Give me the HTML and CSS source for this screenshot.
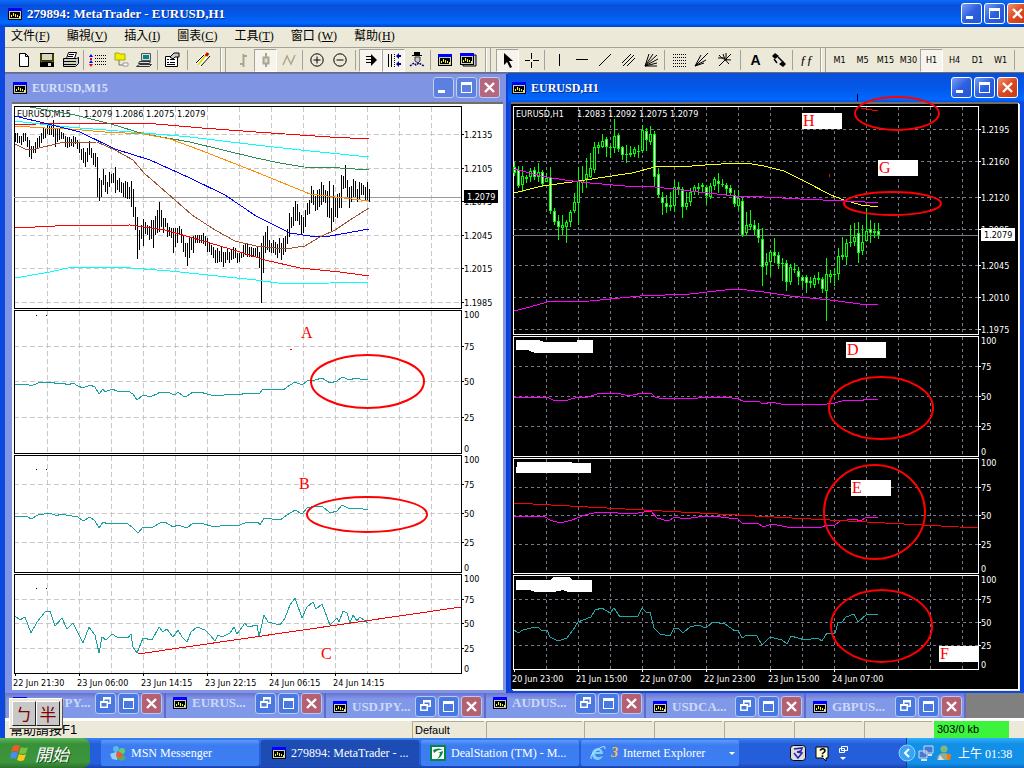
FILE: index.html
```
<!DOCTYPE html>
<html lang="zh-Hant">
<head>
  <meta charset="UTF-8">
  <meta name="viewport" content="width=device-width, initial-scale=1.0">
  <title>279894: MetaTrader - EURUSD,H1</title>
  <link rel="stylesheet" href="styles.css">
</head>
<body>

  <!-- shared icons -->
  <svg class="defs" aria-hidden="true">
    <symbol id="mt" viewBox="0 0 14 12">
      <rect width="14" height="12" fill="#000"/><rect width="14" height="3" fill="#0000ff"/>
      <rect x="1" y="3" width="12" height="8" fill="#ccc"/><rect x="2" y="4" width="10" height="6" fill="#000"/>
      <path d="M3.5 9V7M5.500 8V5M7.500 9V6M9.500 9V7M11.500 10V8" stroke="#ff0"/>
    </symbol>
    <symbol id="min" viewBox="0 0 21 21"><rect x="5" y="13" width="7" height="3" fill="#fff"/></symbol>
    <symbol id="max" viewBox="0 0 21 21"><path d="M5 5h11v11H5zM6 8v7h9V8z" fill="#fff" fill-rule="evenodd"/></symbol>
    <symbol id="restore" viewBox="0 0 21 21"><path d="M8 4h8v7h-3v4H5V8h3zM9.500 6.500V8H13v1.500h1.500v-3zM6.500 10v3.500h5V10z" fill="#fff" fill-rule="evenodd"/></symbol>
    <symbol id="close" viewBox="0 0 21 21"><path d="M6 6l9 9M15 6l-9 9" stroke="#fff" stroke-width="2.400"/></symbol>
  </svg>

  <div class="app">
    <header class="titlebar">
      <svg class="mt-icon"><use href="#mt"/></svg>
      <h1>279894: MetaTrader - EURUSD,H1</h1>
      <div class="win-btns">
        <button aria-label="Minimize"><svg><use href="#min"/></svg></button>
        <button aria-label="Maximize"><svg><use href="#max"/></svg></button>
        <button class="close" aria-label="Close"><svg><use href="#close"/></svg></button>
      </div>
    </header>

    <nav class="menubar">
      <a href="#">文件(<u>F</u>)</a>
      <a href="#">顯視(<u>V</u>)</a>
      <a href="#">插入(<u>I</u>)</a>
      <a href="#">圖表(<u>C</u>)</a>
      <a href="#">工具(<u>T</u>)</a>
      <a href="#">窗口 (<u>W</u>)</a>
      <a href="#">幫助(<u>H</u>)</a>
    </nav>

    <div class="toolbar">
      <button aria-label="New"><svg viewBox="0 0 20 20"><path d="M5.500 3.500h6l3 3v10h-9zM11.500 3.500v3h3" fill="#fff" stroke="#000"/></svg></button>
      <button aria-label="Save"><svg viewBox="0 0 20 20"><path d="M3 3h14v14H3z" fill="#000"/><path d="M5 4h10v6H5z" fill="#d8d4c4"/><path d="M4 4v8l2-1h8l2 1V4" stroke="#808000" fill="none"/><path d="M11 13h3v3h-3z" fill="#ddd"/></svg></button>
      <button aria-label="Print"><svg viewBox="0 0 20 20"><path d="M6.500 8.500l2-6h8l-2 6z" fill="#fff" stroke="#000"/><path d="M3.500 8.500h13l2-1v6l-3 3h-12z" fill="#ccc" stroke="#000"/><path d="M4 11.500h12M4 14.500h12M9 4.500h5M8 6.500h5" stroke="#000"/><path d="M10 13h3" stroke="#ee0"/></svg></button>
      <span class="sep"></span>
      <button aria-label="Market watch"><svg viewBox="0 0 20 20"><path d="M7 5.500h12M7 8.500h12M7 11.500h12M7 14.500h12" stroke="#000" stroke-dasharray="1 1"/><path d="M3 4l2 3H1zM3 10l2 3H1z" fill="#00f"/><path d="M3 17l2-3H1zM2 8h2v2H2z" fill="#e00"/></svg></button>
      <button aria-label="Navigator"><svg viewBox="0 0 20 20"><path d="M4 3h4l1 1h5v6H4z" fill="#ee0" stroke="#aa0"/><path d="M8 10v5h4" stroke="#777" fill="none"/><path d="M12 13h5v3h-5z" fill="#fff" stroke="#999"/></svg></button>
      <button aria-label="Terminal"><svg viewBox="0 0 20 20"><path d="M7.500 3.500h9v7h-9z" fill="#ddd" stroke="#555"/><path d="M9 5h6v4H9z" fill="#088"/><path d="M5.500 11.500h11l-1 2h-11zM2.500 16.500l3-2h12l-2 2z" fill="#ddd" stroke="#333"/></svg></button>
      <span class="sep"></span>
      <button aria-label="Properties"><svg viewBox="0 0 20 20"><path d="M3.500 6.500h12v10h-12z" fill="#fff" stroke="#000"/><path d="M5 9.500h2M8 9.500h5M5 12.500h2M8 12.500h5M5 14.500h8" stroke="#000"/><path d="M8 7l4-4h5v4h-4l-2 2z" fill="#ccc" stroke="#000"/></svg></button>
      <span class="sep wide"></span>
      <button aria-label="Edit"><svg viewBox="0 0 20 20"><path d="M2 13l8-9 7 3-9 10z" fill="#fff"/><path d="M3 13l8-8M8 16l9-10" stroke="#000"/><path d="M5 15l8-10" stroke="#dd0" stroke-width="2"/><path d="M13 6l2-3" stroke="#c00" stroke-width="3"/></svg></button>
      <span class="grip"></span>
      <button aria-label="Bar chart"><svg viewBox="0 0 20 20"><path d="M10.500 4v13M7 14h3M11 6h3" stroke="#aaa690" stroke-width="2"/></svg></button>
      <button class="pressed" aria-label="Candles"><svg viewBox="0 0 20 20"><path d="M10 3v14" stroke="#aaa690" stroke-width="2"/><path d="M7.500 7.500h5v6h-5z" fill="#ddd" stroke="#aaa690" stroke-width="2"/></svg></button>
      <button aria-label="Line chart"><svg viewBox="0 0 20 20"><path d="M4 15l4-9 4 8 4-9" stroke="#aaa690" stroke-width="1.500" fill="none"/></svg></button>
      <span class="sep"></span>
      <button aria-label="Zoom in"><svg viewBox="0 0 20 20"><circle cx="10" cy="10" r="6.200" fill="none" stroke="#000"/><path d="M6.500 10h7M10 6.500v7" stroke="#000"/></svg></button>
      <button aria-label="Zoom out"><svg viewBox="0 0 20 20"><circle cx="10" cy="10" r="6.200" fill="none" stroke="#000"/><path d="M6.500 10h7" stroke="#000"/></svg></button>
      <span class="sep wide"></span>
      <button class="pressed" aria-label="Auto scroll"><svg viewBox="0 0 20 20"><path d="M10 4l6 6-6 6z"/><path d="M5 6.500h5M5 9.500h5M5 12.500h5" stroke="#000"/></svg></button>
      <button class="pressed" aria-label="Chart shift"><svg viewBox="0 0 20 20"><path d="M4.500 4v13M7.500 4v13" stroke="#000"/><path d="M10.500 4v13" stroke="#000" stroke-dasharray="1 1"/><path d="M12 6l3-3v2h2v2h-2v2zM12 14l3-3v2h2v2h-2v2z" fill="#008"/></svg></button>
      <button aria-label="Advisors"><svg viewBox="0 0 20 20"><path d="M7 2h6v3h2v1H5V5h2z"/><path d="M8 7h5v4l-2 2-3-2z" fill="#ccc" stroke="#333"/><path d="M3 16l4-3 2 2 3-2 5 3" stroke="#008" stroke-width="1.500" stroke-dasharray="2 1" fill="none"/></svg></button>
      <span class="sep"></span>
      <button aria-label="New chart"><svg class="mt-icon"><use href="#mt"/></svg></button>
      <button aria-label="Profiles"><svg viewBox="0 0 20 20"><path d="M5 5h13v11H5z" fill="#ccc" stroke="#000"/><use href="#mt" x="2" y="3" width="14" height="12"/></svg></button>
      <span class="grip"></span>
      <button class="pressed" aria-label="Cursor"><svg viewBox="0 0 20 20"><path d="M6 3v12l3-3 3 6 2-1-3-6h4z"/></svg></button>
      <button aria-label="Crosshair"><svg viewBox="0 0 20 20"><path d="M10.500 3v6M10.500 12v6M4 10.500h5M12 10.500h6" stroke="#000"/></svg></button>
      <span class="sep"></span>
      <button aria-label="Vertical line"><svg viewBox="0 0 20 20"><path d="M10.500 4v12" stroke="#000"/></svg></button>
      <button aria-label="Horizontal line"><svg viewBox="0 0 20 20"><path d="M4 9.500h12" stroke="#000"/></svg></button>
      <button aria-label="Trendline"><svg viewBox="0 0 20 20"><path d="M4 16L16 4" stroke="#000"/></svg></button>
      <button aria-label="Channel"><svg viewBox="0 0 20 20"><path d="M4 13l9-9M5 16L16 5M9 16l8-8" stroke="#000"/></svg></button>
      <button aria-label="Gann fan"><svg viewBox="0 0 20 20"><path d="M4 16L8 4M4 16l8-12M4 16L16 5M4 16l13-7M4 16l12-3M4 16h12" stroke="#000"/></svg></button>
      <span class="sep"></span>
      <button aria-label="Fibonacci"><svg viewBox="0 0 20 20"><path d="M4 4.500h13M4 7.500h13M4 10.500h13M4 13.500h13M4 16.500h13" stroke="#000" stroke-dasharray="1 1"/></svg></button>
      <button aria-label="Fibonacci fan"><svg viewBox="0 0 20 20"><path d="M3 16L9 5M3 16L16 3M3 16l11-6M3 16l9-3" stroke="#000"/></svg></button>
      <button aria-label="Fibonacci arcs"><svg viewBox="0 0 20 20"><path d="M4 16L16 4M4 5q3 5 12 5M8 4q1 6 6 10M3 8h6M11 3v8" stroke="#000" fill="none"/></svg></button>
      <span class="sep wide"></span>
      <button aria-label="Text"><b>A</b></button>
      <button aria-label="Arrows"><svg viewBox="0 0 20 20"><path d="M6 3l4 3-4 3-3-3zM14 11l3 3-3 3-4-3z"/><path d="M5 9l3 4M9 7l5 5" stroke="#000" stroke-width="1.500"/></svg></button>
      <span class="sep"></span>
      <button aria-label="Indicators"><i>ƒƒ</i></button>
      <span class="grip narrow"></span>
      <button>M1</button>
      <button>M5</button>
      <button>M15</button>
      <button>M30</button>
      <button class="pressed">H1</button>
      <button>H4</button>
      <button>D1</button>
      <button>W1</button>
      <span class="sep"></span>
    </div>

    <main class="workspace">
      <section class="chart-window inactive">
        <div class="mdi-title">
          <svg class="mt-icon"><use href="#mt"/></svg>
          <h2>EURUSD,M15</h2>
          <div class="win-btns">
            <button aria-label="Minimize"><svg><use href="#min"/></svg></button>
            <button aria-label="Maximize"><svg><use href="#max"/></svg></button>
            <button class="close" aria-label="Close"><svg><use href="#close"/></svg></button>
          </div>
        </div>
        <div class="client"><svg id="m15" viewBox="12 104 491 586" preserveAspectRatio="xMinYMin meet"></svg></div>
      </section>

      <section class="chart-window active">
        <div class="mdi-title">
          <svg class="mt-icon"><use href="#mt"/></svg>
          <h2>EURUSD,H1</h2>
          <div class="win-btns">
            <button aria-label="Minimize"><svg><use href="#min"/></svg></button>
            <button aria-label="Maximize"><svg><use href="#max"/></svg></button>
            <button class="close" aria-label="Close"><svg><use href="#close"/></svg></button>
          </div>
        </div>
        <div class="client"><svg id="h1" viewBox="511 104 507 585" preserveAspectRatio="xMinYMin meet"></svg></div>
      </section>
    </main>

    <div class="minimized" id="minimized"></div>

    <footer class="statusbar">
      <span class="help">幫助請按F1</span>
      <span class="cell profile">Default</span>
      <span class="cell first"></span>
      <span class="cell"></span>
      <span class="cell"></span>
      <span class="cell"></span>
      <span class="cell"></span>
      <span class="cell"></span>
      <span class="traffic">303/0 kb</span>
      <div class="ime"><button>ㄅ</button><button>半</button></div>
    </footer>
  </div>

  <div class="taskbar">
    <button class="start">
      <svg viewBox="0 0 20 18"><path d="M3 2q4-2 7 0L8 8q-3-2-7 0z" fill="#f05a28"/><path d="M11 3q4 2 7 0l-2 6q-4 2-7 0z" fill="#7cc242"/><path d="M1 9q3-2 7 0l-2 6q-3-2-6 0z" fill="#4a8cf0"/><path d="M9 10q4 2 7 0l-2 6q-3 2-7 0z" fill="#fbc916"/></svg>
      開始
    </button>
    <button class="task">
      <svg viewBox="0 0 16 16"><circle cx="6" cy="4" r="3" fill="#5db5e8"/><circle cx="12" cy="6" r="3" fill="#6c6"/><path d="M0 9l6-2 3 3-2 5-5-1z" fill="#9cd0f5"/><path d="M8 9l6 1 2 4-5 2-4-2z" fill="#58a868"/><circle cx="9" cy="10" r="3" fill="#e86030"/></svg>
      MSN Messenger
    </button>
    <button class="task current">
      <svg class="mt-icon"><use href="#mt"/></svg>
      279894: MetaTrader - ...
    </button>
    <button class="task">
      <svg viewBox="0 0 16 16"><rect x="1" y="1" width="14" height="14" fill="#fff" stroke="#084" stroke-width="2"/><path d="M3 5q6-3 10 0-5-1-9 3zM8 8q4-2 5-2 0 5-6 8 3-3 3-6z" fill="#084"/></svg>
      DealStation (TM) - M...
    </button>
    <button class="task">
      <svg viewBox="0 0 16 16"><path d="M13 9H5q1 4 5 3l3-1q-2 4-6 4-5-1-5-6t6-6q5 1 5 6zM5 7h5q-1-3-5 0z" fill="#7fd0ff" fill-rule="evenodd"/><path d="M1 14Q0 9 8 4t7 0" stroke="#bfe8ff" fill="none"/></svg>
      <em>3</em> Internet Explorer
      <span class="drop"></span>
    </button>
    <div class="lang">
      <svg viewBox="0 0 16 16"><rect x=".5" y=".5" width="15" height="15" rx="3" fill="#ddd" stroke="#000"/><path d="M4 4l8-1-1 3-4 1 5 1-4 5-4-5" stroke="#22a" fill="none" stroke-width="1.500"/></svg>
      <svg viewBox="0 0 16 16"><path d="M2 2h12v11h-2v3l-3-3H2z" fill="#ffd" stroke="#000"/><text x="5" y="12">?</text></svg>
      <svg viewBox="0 0 10 16"><path d="M3.500 1.500h6v4h-6zM1.500 3.500h5v4h-5z" fill="#245edb" stroke="#fff"/><path d="M2 12h6l-3 3z" fill="#fff"/></svg>
    </div>
    <div class="tray">
      <svg class="arrow" viewBox="0 0 18 18"><circle cx="9" cy="9" r="8" fill="#3aa4f4" stroke="#9cf"/><path d="M11 5L7 9l4 4" stroke="#fff" stroke-width="2" fill="none"/></svg>
      <svg viewBox="0 0 16 16"><path d="M6 1h9v7H6zM1 6h8v7H1z" fill="#4878d0" stroke="#cde"/><path d="M3 15h6M10 10h4" stroke="#ddd" stroke-width="2"/></svg>
      <svg viewBox="0 0 16 16"><circle cx="8" cy="4" r="3.500" fill="#7db87d"/><path d="M1 15q0-7 7-7t6 7z" fill="#8fae8f"/><path d="M11 9h4l-1 6h-3z" fill="#f70"/><path d="M4 10l4 5H2z" fill="#dde"/></svg>
      <time>上午 01:38</time>
    </div>
  </div>

  <script src="charts.js"></script>
</body>
</html>
```
FILE: styles.css
```
* {
  box-sizing: border-box;
}
body {
  margin: 0;
  height: 100vh;
  display: flex;
  flex-direction: column;
  overflow: hidden;
  background: #808080;
  color: #000;
  font-family: "Liberation Serif", "Noto Sans CJK TC", serif;
  font-size: 12px;
}
button {
  border: 0;
  padding: 0;
  font: inherit;
  color: inherit;
  background: none;
}
a {
  color: inherit;
  text-decoration: none;
}
h1,
h2 {
  margin: 0;
  font-size: 12px;
  line-height: 16px;
  flex: 1;
  white-space: nowrap;
}
.defs {
  position: absolute;
  width: 0;
  height: 0;
}
.mt-icon {
  width: 14px;
  height: 12px;
  flex: none;
}

/* main window */
.app {
  flex: 1;
  min-height: 0;
  display: flex;
  flex-direction: column;
  border-left: 5px solid #0a48e0;
}
.titlebar {
  height: 27px;
  flex: none;
  display: flex;
  align-items: center;
  gap: 5px;
  margin-left: -5px;
  padding-left: 8px;
  overflow: hidden;
  background: linear-gradient(#0c6cf8, #0850dc 20%, #0458e8 55%, #0068ff 85%, #0040c8);
  color: #fff;
  text-shadow: 1px 1px #0a2a88;
}
.titlebar h1 {
  font-size: 13px;
}
.titlebar .win-btns {
  margin-right: -4px;
}
.win-btns {
  display: flex;
  gap: 2px;
}
.win-btns button {
  width: 21px;
  height: 21px;
  border: 1px solid #fff;
  border-radius: 3px;
  background: linear-gradient(135deg, #7c9cf4, #2c60e0 50%, #2456d4);
}
.win-btns button.close {
  background: linear-gradient(135deg, #f09070, #dc4820 50%, #c83c14);
}
.win-btns svg {
  display: block;
  width: 21px;
  height: 21px;
  margin: -1px;
}

.menubar {
  height: 20px;
  flex: none;
  display: flex;
  gap: 17px;
  padding-left: 6px;
  line-height: 19px;
  background: #ece9d8;
}
.toolbar {
  height: 26px;
  flex: none;
  display: flex;
  align-items: center;
  padding-left: 7px;
  background: #ece9d8;
  border-top: 1px solid #a5a29a;
  border-bottom: 1px solid #716f64;
  font-family: "DejaVu Sans Condensed", "Liberation Sans", sans-serif;
  font-size: 9px;
}
.toolbar button {
  width: 23px;
  height: 23px;
  flex: none;
  display: flex;
  align-items: center;
  justify-content: center;
}
.toolbar button svg:not(.mt-icon) {
  width: 20px;
  height: 20px;
}
.toolbar .pressed {
  background: #f6f4ec;
  border: 1px solid;
  border-color: #a5a29a #fff #fff #a5a29a;
}
.toolbar b {
  font-family: "Liberation Sans", sans-serif;
  font-size: 14px;
}
.toolbar i {
  font-family: "Liberation Serif", serif;
  font-size: 13px;
}
.sep {
  width: 5px;
  height: 20px;
  flex: none;
  background: linear-gradient(#a5a29a, #a5a29a) center / 1px 100% no-repeat;
}
.sep.wide {
  width: 8px;
}
.grip {
  width: 17px;
  height: 24px;
  flex: none;
  background:
    linear-gradient(#a5a29a, #a5a29a) 6px 0 / 1px 100% no-repeat,
    linear-gradient(#fff, #fff) 7px 0 / 1px 100% no-repeat,
    linear-gradient(#a5a29a, #a5a29a) 11px 0 / 1px 100% no-repeat;
}
.grip.narrow {
  width: 10px;
  background-position: 2px 0, 3px 0, 7px 0;
}

/* chart windows */
.workspace {
  flex: 1;
  min-height: 0;
  display: grid;
  grid-template-columns: 503fr 516fr;
}
.chart-window {
  display: flex;
  flex-direction: column;
  min-width: 0;
  min-height: 0;
}
.mdi-title {
  height: 29px;
  flex: none;
  display: flex;
  align-items: center;
  gap: 5px;
}
.inactive {
  padding: 0 5px 3px 7px;
  background: #8094e4;
  border-right: 0;
  box-shadow: inset 0 1px #6070d0, inset -2px 0 #1040d8;
}
.inactive .mdi-title {
  padding: 0 3px 0 1px;
  color: #d8e0fc;
}
.inactive .win-btns button {
  border-color: #c4ccf0;
  background: #5c80e0;
}
.inactive .win-btns button.close {
  background: #b46880;
}
.active {
  padding: 0 6px 4px 3px;
  background: linear-gradient(#0850dc, #0458e8 15px, #0068ff 26px, #0a48e0 30px);
}
.active .mdi-title {
  padding-left: 1px;
  color: #fff;
  text-shadow: 1px 1px #0a2a88;
}
.client {
  flex: 1;
  min-height: 0;
  border-top: 2px solid #716f64;
}
.inactive .client {
  background: #fff;
}
.active .client {
  background: #000;
  box-shadow: 1px 1px #fff, 2px 2px #ece9d8;
}
.client svg {
  display: block;
  position: relative;
  width: 100%;
  height: 100%;
  overflow: visible;
  shape-rendering: crispEdges;
  font-family: "DejaVu Sans Condensed", "Liberation Sans", sans-serif;
  font-size: 9px;
}
.client path {
  fill: none;
}
.client .note {
  font-family: "Liberation Serif", serif;
  font-size: 16px;
  fill: #f00;
}
.client ellipse {
  fill: none;
  stroke: #f00;
  stroke-width: 2;
  shape-rendering: auto;
}

/* minimized charts */
.minimized {
  height: 28px;
  flex: none;
  display: flex;
  padding-left: 1px;
  border-bottom: 3px solid #fff;
}
.mini {
  width: 160px;
  flex: none;
  display: flex;
  align-items: center;
  gap: 5px;
  padding: 2px 2px 0 7px;
  overflow: hidden;
  background: linear-gradient(#6c70d0, #8098e8 6px);
  border-right: 2px solid #6468c8;
  color: #cdd8fa;
  font-size: 13px;
  font-weight: bold;
}
.mini.raised {
  padding: 0 2px 5px 7px;
}
.mini span {
  flex: 1;
  white-space: nowrap;
}
.mini .win-btns button {
  border-color: #b8c8f4;
  background: #4878e0;
}
.mini .win-btns button.close {
  background: #b46070;
}

.statusbar {
  position: relative;
  height: 17px;
  flex: none;
  display: flex;
  padding-right: 15px;
  background: #ece9d8;
  font-family: "Liberation Sans", "Noto Sans CJK TC", sans-serif;
  font-size: 11px;
  line-height: 17px;
}
.help {
  flex: 1;
  padding-left: 5px;
  font-size: 13px;
}
.cell {
  width: 68px;
  margin-right: 2px;
  border: solid #b0ac94;
  border-width: 1px 0 0 1px;
}
.cell.profile {
  width: 72px;
  padding-left: 2px;
}
.cell.first {
  width: 96px;
}
.traffic {
  width: 75px;
  padding-left: 3px;
  background: #3cf43c;
}
/* input method bar floats over the frame */
.ime {
  position: absolute;
  left: 4px;
  bottom: 9px;
  display: flex;
  padding: 2px;
  background: #ece9d8;
  border: 1px solid;
  border-color: #fff #555 #555 #fff;
}
.ime button {
  width: 24px;
  height: 25px;
  background: #c8c8c8;
  border: 1px solid;
  border-color: #fff #222 #222 #fff;
  color: #800000;
  font-family: "Noto Sans CJK TC", sans-serif;
  font-size: 17px;
  line-height: 22px;
}

/* taskbar */
.taskbar {
  height: 30px;
  flex: none;
  display: flex;
  align-items: stretch;
  gap: 2px;
  background: linear-gradient(#3c84f0, #245edb 20%, #245edb 85%, #1840a8);
  color: #fff;
}
.start {
  width: 90px;
  margin-right: 9px;
  display: flex;
  align-items: center;
  gap: 5px;
  padding-left: 10px;
  border-radius: 0 8px 8px 0;
  background: linear-gradient(#5cb85c, #389038 20%, #3c963c 80%, #2c702c);
  font-size: 17px;
  font-style: italic;
  text-shadow: 1px 1px #1c4c1c;
}
.start svg {
  width: 20px;
  height: 18px;
}
.task {
  width: 158px;
  flex: 0 1 auto;
  margin: 2px 0;
  display: flex;
  align-items: center;
  gap: 5px;
  padding-left: 9px;
  border-radius: 2px;
  background: linear-gradient(#5c9cfc, #3c7cf0 20%, #3c80f4);
  text-align: left;
  white-space: nowrap;
}
.task.current {
  background: #1c4cb4;
  padding-left: 11px;
}
.task > svg:not(.mt-icon) {
  width: 16px;
  height: 16px;
}
.task em {
  color: #ffc040;
  font-size: 14px;
  font-weight: bold;
}
.drop {
  margin-left: auto;
  margin-right: 4px;
  border: 3px solid transparent;
  border-top-color: #fff;
  border-bottom: 0;
}
.lang {
  flex: 1;
  display: flex;
  align-items: center;
  justify-content: flex-end;
  gap: 8px;
  padding-right: 56px;
}
.lang svg {
  height: 16px;
}
.lang text {
  font: bold 12px "Liberation Sans", sans-serif;
}
.tray {
  width: 118px;
  display: flex;
  align-items: center;
  gap: 2px;
  background: linear-gradient(#30b0f8, #1290e8 20%, #1290e8 85%, #0c68c0);
  border-left: 1px solid #0a3c90;
}
.tray svg {
  width: 16px;
  height: 16px;
}
.tray .arrow {
  width: 18px;
  height: 18px;
  margin-left: -9px;
}
.tray time {
  margin-left: 4px;
  white-space: nowrap;
}
```
FILE: charts.js
```
const NS = 'http://www.w3.org/2000/svg';

function add(svg, name, attrs, text) {
  const el = document.createElementNS(NS, name);
  for (const key in attrs) el.setAttribute(key, attrs[key]);
  if (text !== undefined) el.textContent = text;
  svg.appendChild(el);
}

// panes, grid, axis and scale labels
function drawFrame(svg, c) {
  c.panes.forEach(p => {
    p.grid.forEach(y => add(svg, 'path', { d: `M${c.left} ${y}.5H${c.right}`, stroke: c.grid, 'stroke-dasharray': c.dash }));
    for (let x = c.gridX; x < c.right; x += 32) {
      add(svg, 'path', { d: `M${x}.5 ${p.top + 1}V${p.bottom}`, stroke: c.grid, 'stroke-dasharray': c.dash });
    }
    add(svg, 'path', { d: `M${c.left}.5 ${p.top}.5H${c.right}.5V${p.bottom}.5H${c.left}.5Z`, stroke: c.ink });
    p.grid.forEach(y => add(svg, 'path', { d: `M${c.right} ${y}.5h3`, stroke: c.ink }));
    p.labels.forEach(([text, y]) => add(svg, 'text', { x: c.right + 3, y: y + 4, fill: c.ink }, text));
  });
  c.times.forEach((text, i) => {
    add(svg, 'path', { d: `M${c.left + 1 + i * 64}.5 ${c.bottom}v3`, stroke: c.ink });
    add(svg, 'text', { x: c.left - 1 + i * 64, y: c.bottom + 13, fill: c.ink }, text);
  });
  add(svg, 'text', { x: c.left + 3, y: 117, fill: c.ink }, c.symbol);
  c.prices.forEach((text, i) => add(svg, 'text', { x: c.priceX + i * 31, y: 117, fill: c.ink }, text));
}

function drawLines(svg, lines) {
  lines.forEach(([color, points]) => add(svg, 'polyline', { points, fill: 'none', stroke: color }));
}

function drawPrice(svg, c, y, back, ink) {
  add(svg, 'path', { d: `M${c.left} ${y}.5H${c.right}`, stroke: c.grid === '#c8c8c8' ? '#999' : c.grid });
  add(svg, 'rect', { x: c.right + 3, y: y - 7, width: 34, height: 13, fill: back });
  add(svg, 'text', { x: c.right + 6, y: y + 3, fill: ink }, '1.2079');
}

function note(svg, text, x, y, box) {
  if (box) add(svg, 'rect', { x: x - 1, y: y - 13, width: 40, height: 16, fill: '#fff' });
  add(svg, 'text', { x, y, class: 'note' }, text);
}

function ring(svg, x1, y1, x2, y2) {
  add(svg, 'ellipse', { cx: (x1 + x2) / 2, cy: (y1 + y2) / 2, rx: (x2 - x1) / 2, ry: (y2 - y1) / 2 });
}

// ---------- M15 ----------
const m15 = document.getElementById('m15');
const left = {
  left: 14, right: 461, bottom: 673, gridX: 47, grid: '#c8c8c8', ink: '#000', dash: '5 3',
  symbol: 'EURUSD,M15', prices: ['1.2079', '1.2086', '1.2075', '1.2079'], priceX: 84,
  times: ['22 Jun 21:30', '23 Jun 06:00', '23 Jun 14:15', '23 Jun 22:15', '24 Jun 06:15', '24 Jun 14:15'],
  panes: [
    { top: 106, bottom: 308, grid: [134, 168, 201, 235, 268, 302],
      labels: [['1.2135', 134], ['1.2105', 168], ['1.2075', 201], ['1.2045', 235], ['1.2015', 268], ['1.1985', 302]] },
    { top: 310, bottom: 453, grid: [346, 381, 417], labels: [['100', 314], ['75', 346], ['50', 381], ['25', 417], ['0', 448]] },
    { top: 455, bottom: 572, grid: [484, 513, 542], labels: [['100', 459], ['75', 484], ['50', 513], ['25', 542], ['0', 567]] },
    { top: 574, bottom: 673, grid: [599, 623, 648], labels: [['100', 578], ['75', 599], ['50', 623], ['25', 648], ['0', 668]] }
  ]
};
// high,low per bar
const bars = `133,142 133,143 136,143 136,145 133,142 133,141 137,147 140,157 146,159 146,153 142,153 138,148
136,147 133,143 128,139 128,138 125,134 126,135 126,135 120,137 128,147 129,142 129,140 132,139 133,139 136,147
137,148 137,147 139,146 136,147 137,144 140,149 142,153 149,160 148,163 152,167 148,162 141,155 148,158 153,165
153,167 157,197 178,201 180,197 169,185 175,192 182,194 172,187 174,183 173,183 167,193 180,190 178,192 182,193
183,197 181,198 182,199 187,199 181,207 189,217 207,230 217,259 230,250 225,239 219,246 222,234 225,235 226,240
220,239 220,248 216,235 210,233 202,232 210,227 218,233 218,227 223,237 227,236 228,238 228,253 228,247 228,243
226,235 229,243 236,252 243,257 243,266 238,258 238,250 236,253 235,243 235,243 235,243 235,243 233,244 236,246
238,252 243,252 245,255 247,258 250,263 248,263 251,262 246,262 252,267 252,263 249,260 252,263 250,260 247,259
248,258 253,263 253,262 252,258 245,257 243,255 244,257 247,257 247,257 248,256 248,256 247,257 252,268 243,303
236,273 232,253 226,250 240,252 243,253 240,253 242,255 244,258 238,253 243,260 238,255 236,252 229,244 213,237
217,228 207,226 201,221 204,221 212,225 215,235 217,233 210,227 203,215 200,214 186,203 190,205 196,211 190,210
189,207 182,205 185,202 190,203 191,217 181,218 208,232 185,222 197,217 194,218 193,208 175,208 176,189 165,188
180,197 187,208 186,202 179,197 181,197 189,202 182,199 183,195 185,195 187,200 182,201 189,202`.split(/\s+/);

drawFrame(m15, left);
drawPrice(m15, left, 197, '#000', '#fff');
add(m15, 'path', { d: bars.map((b, i) => `M${15 + i * 2}.5 ${b.replace(',', 'V')}`).join(''), stroke: '#000' });
drawLines(m15, [
  ['#f00', '15,125 57,123 144,123 168,125 202,128 256,132 300,135 330,137 369,139'],
  ['#0ff', '15,121 48,125 80,128 144,133 190,137 256,145 310,151 369,157'],
  ['#2e8b57', '30,107 75,115 111,124 144,134 190,142 256,158 280,163 304,167 340,168 369,170'],
  ['#ff8c00', '15,126 45,128 70,129 105,132 144,134 170,139 200,150 256,172 310,194 335,197 369,201'],
  ['#00f', '15,116 48,124 80,132 115,149 150,160 190,178 225,195 256,216 290,233 310,236 330,236 369,229'],
  ['#a0522d', '15,144 25,149 35,149 60,143 97,142 115,150 133,160 144,173 175,200 192,215 215,230 235,241 256,246 285,249 305,246 320,237 335,230 350,220 369,208'],
  ['#f00', '15,228 55,226 130,225 165,230 200,240 240,252 265,260 300,268 340,272 369,276'],
  ['#0ff', '15,278 50,272 72,267 118,267 170,271 256,280 285,284 330,283 369,282'],
  ['#18a0a0', '15,384 27,384 31,386 38,383 45,382 52,382 57,384 63,383 68,385 73,383 78,386 83,388 90,385 95,387 99,394 103,389 105,392 112,389 117,391 128,391 133,394 137,400 143,395 147,396 152,396 157,394 160,392 163,393 167,392 175,395 178,392 183,396 187,396 193,392 200,392 207,394 215,396 233,394 240,395 245,393 260,393 263,389 283,390 290,385 295,382 302,385 307,381 315,380 322,378 330,383 337,381 342,377 350,380 355,378 360,379 368,379'],
  ['#18a0a0', '15,516 27,516 31,519 38,515 50,513 57,516 60,514 78,517 83,521 90,517 95,521 99,528 103,522 108,524 115,523 128,524 133,528 138,533 143,527 147,528 153,527 160,523 165,522 173,527 178,525 187,528 193,523 200,523 215,527 225,525 240,525 247,522 258,522 260,525 264,518 280,520 287,515 295,510 302,514 307,508 315,506 322,506 330,513 337,511 342,505 350,509 358,508 368,510'],
  ['#18a0a0', '15,616 20,620 25,617 31,633 37,622 45,612 50,611 55,626 62,618 67,629 73,623 78,633 83,643 89,627 95,635 99,653 102,637 106,640 112,634 117,637 128,638 131,634 133,647 137,653 143,638 152,640 159,627 163,632 167,629 173,637 178,630 182,637 187,642 191,632 197,627 205,630 210,635 215,641 218,635 222,637 230,633 234,627 237,634 245,623 248,627 257,625 259,637 264,615 268,622 280,625 285,618 290,605 295,598 302,618 307,607 313,602 316,609 322,604 330,625 337,618 339,622 343,611 347,613 350,623 353,615 357,621 360,617 368,623'],
  ['#f00', '138,654 461,607']
]);
add(m15, 'path', { d: 'M36 315.500h1m9 0h1M36 469.500h1m9 0h1M36 588.500h1m9 0h1', stroke: '#000' });
add(m15, 'path', { d: 'M290 349.500h2', stroke: '#f00' });
ring(m15, 311, 355, 424, 408);
ring(m15, 307, 497, 427, 532);
note(m15, 'A', 301, 338);
note(m15, 'B', 299, 489);
note(m15, 'C', 321, 659);

// ---------- H1 ----------
const h1 = document.getElementById('h1');
const right = {
  left: 513, right: 978, bottom: 669, gridX: 546, grid: '#778', ink: '#fff', dash: '3 3',
  symbol: 'EURUSD,H1', prices: ['1.2083', '1.2092', '1.2075', '1.2079'], priceX: 577,
  times: ['20 Jun 23:00', '21 Jun 15:00', '22 Jun 07:00', '22 Jun 23:00', '23 Jun 15:00', '24 Jun 07:00'],
  panes: [
    { top: 106, bottom: 334, grid: [129, 161, 197, 229, 265, 297, 329],
      labels: [['1.2195', 129], ['1.2160', 161], ['1.2120', 197], ['1.2085', 229], ['1.2045', 265], ['1.2010', 297], ['1.1975', 329]] },
    { top: 336, bottom: 456, grid: [366, 396, 426], labels: [['100', 340], ['75', 366], ['50', 396], ['25', 426], ['0', 451]] },
    { top: 458, bottom: 573, grid: [487, 515, 544], labels: [['100', 462], ['75', 487], ['50', 515], ['25', 544], ['0', 568]] },
    { top: 575, bottom: 669, grid: [599, 622, 645], labels: [['100', 579], ['75', 599], ['50', 622], ['25', 645], ['0', 664]] }
  ]
};
// high,low,body top,body bottom, w = down candle
const candles = `162,176,167,173,w 166,188,170,186,w 166,192,176,185 175,183,177,179 168,182,171,177 167,180,170,177,w
163,182,172,177 170,187,172,184,w 173,182,178,182 167,214,177,211,w 208,225,211,222,w 215,240,221,227,w
215,235,225,228 220,243,222,227 210,227,212,222 193,213,202,211 167,225,181,203 166,193,180,183 158,188,174,179
153,178,168,177 142,173,147,170 142,154,145,148 134,148,141,147 137,157,139,147,w 145,158,147,148 119,153,136,148
133,152,135,149,w 146,160,147,155,w 145,163,154,155 146,157,153,155 147,157,149,154 145,158,151,151
125,153,130,151 128,151,131,140,w 126,145,134,142 131,187,134,177,w 168,198,174,195,w 192,215,197,203,w
195,213,203,207,w 192,211,205,207 180,212,187,206 182,195,187,189 187,218,189,207,w 192,210,203,207
188,206,192,202 185,195,187,192 183,195,187,189 183,192,185,187 185,205,187,196,w 183,199,186,197
177,190,179,186 173,193,181,184,w 179,187,184,185 183,195,185,189,w 185,195,188,193,w 190,207,195,204,w
190,210,198,206 198,237,201,235,w 212,235,225,233 210,230,224,227 220,235,225,230,w 223,243,229,238,w
228,286,239,267,w 253,275,262,265 250,276,252,262 238,263,252,256,w 252,269,255,264,w 258,281,263,264
260,291,263,282,w 264,285,267,282 263,273,269,270 267,285,271,277,w 275,288,277,281,w 275,293,277,283,w
277,288,281,283 275,288,278,285 272,284,278,280 277,293,279,289,w 258,321,274,291 270,283,274,277
268,286,274,275 248,280,256,274 237,260,255,257 239,265,243,257 225,247,242,243 223,246,237,242
222,263,233,253,w 225,255,242,251 208,240,231,241 220,243,229,233,w 223,238,231,233 223,239,231,235,w`.split(/\s+/);

drawFrame(h1, right);
drawPrice(h1, right, 235, '#fff', '#000');
candles.forEach((row, i) => {
  const [high, low, top, bottom, down] = row.split(',');
  const x = 514 + i * 4;
  add(h1, 'path', { d: `M${x}.5 ${high}V${low}`, stroke: '#0f0' });
  const height = Math.max(bottom - top, 1);
  add(h1, 'rect', { x: x - 1, y: top, width: 3, height, fill: '#0f0' });
  if (height > 2) add(h1, 'rect', { x, y: +top + 1, width: 1, height: height - 2, fill: down ? '#fff' : '#000' });
});
drawLines(h1, [
  ['#ff0', '514,193 542,186 572,182 605,177 632,173 655,167 665,166 692,166 705,165 738,163 752,164 764,166 784,171 804,181 831,195 844,200 861,205 878,207'],
  ['#f0f', '514,169 530,173 546,177 565,180 590,183 625,186 655,187 690,191 735,196 764,197 800,199 845,201 865,202 878,202'],
  ['#f0f', '514,311 530,307 547,302 590,301 640,296 690,294 725,290 738,289 764,292 790,296 830,300 860,304 878,305'],
  ['#f0f', '514,397 520,398 525,397 542,398 547,397 553,400 560,401 568,400 578,397 588,397 597,394 617,393 625,395 633,395 642,393 651,393 655,397 663,399 675,398 685,399 698,398 725,397 738,399 743,401 758,401 763,404 772,402 785,405 795,404 805,404 822,405 827,404 835,403 845,400 855,400 860,401 867,399 878,399'],
  ['#f0f', '514,516 545,517 550,520 560,523 572,520 585,515 598,512 618,513 638,513 651,511 657,518 668,521 675,517 685,519 698,517 712,516 738,519 742,523 758,523 763,527 772,524 787,527 822,527 827,525 835,525 840,521 855,519 860,521 867,517 878,518'],
  ['#20a8a8', '514,630 518,633 523,630 531,628 538,627 542,631 547,630 550,637 558,641 567,638 573,630 578,622 591,617 595,610 602,608 610,613 614,608 620,617 638,616 642,608 647,613 650,612 654,628 660,634 670,636 674,628 678,628 683,633 690,627 698,625 706,628 713,622 725,624 735,631 738,630 742,638 747,635 757,636 762,645 770,637 782,640 787,644 791,636 805,640 818,638 822,641 827,633 835,633 838,623 842,622 846,617 854,614 858,622 867,614 878,615'],
  ['#f00', '514,503 978,528'],
  ['#f00', '861,108 878,111'],
  ['#f00', '829,174 829,177'],
  ['#000', '857,94 857,101']
]);
// whited-out indicator names
add(h1, 'polygon', { points: '516,340 538,340 545,342 577,342 577,340 593,340 593,353 535,353 528,350 516,350', fill: '#fff' });
add(h1, 'polygon', { points: '517,462 571,462 573,463 591,463 591,473 516,473', fill: '#fff' });
add(h1, 'polygon', { points: '516,580 550,580 554,577 569,577 573,580 592,580 592,592 568,592 563,590 553,592 535,592 530,590 516,590', fill: '#fff' });

note(h1, 'H', 803, 126, true);
note(h1, 'G', 879, 173, true);
note(h1, 'D', 847, 355, true);
note(h1, 'E', 852, 493, true);
note(h1, 'F', 940, 659, true);
ring(h1, 855, 97, 939, 130);
ring(h1, 844, 192, 941, 215);
ring(h1, 829, 377, 933, 439);
ring(h1, 824, 465, 925, 559);
ring(h1, 831, 590, 932, 662);

// ---------- minimized charts ----------
const minis = [['USDJPY...', true], ['EURUS...', true], ['USDJPY...', false], ['AUDUS...', true], ['USDCA...', false], ['GBPUS...', false]];
document.getElementById('minimized').innerHTML = minis.map(([name, raised]) => `
  <div class="mini${raised ? ' raised' : ''}">
    <svg class="mt-icon"><use href="#mt"/></svg>
    <span>${name}</span>
    <div class="win-btns">
      <button aria-label="Restore"><svg><use href="#restore"/></svg></button>
      <button aria-label="Maximize"><svg><use href="#max"/></svg></button>
      <button class="close" aria-label="Close"><svg><use href="#close"/></svg></button>
    </div>
  </div>`).join('');
```
